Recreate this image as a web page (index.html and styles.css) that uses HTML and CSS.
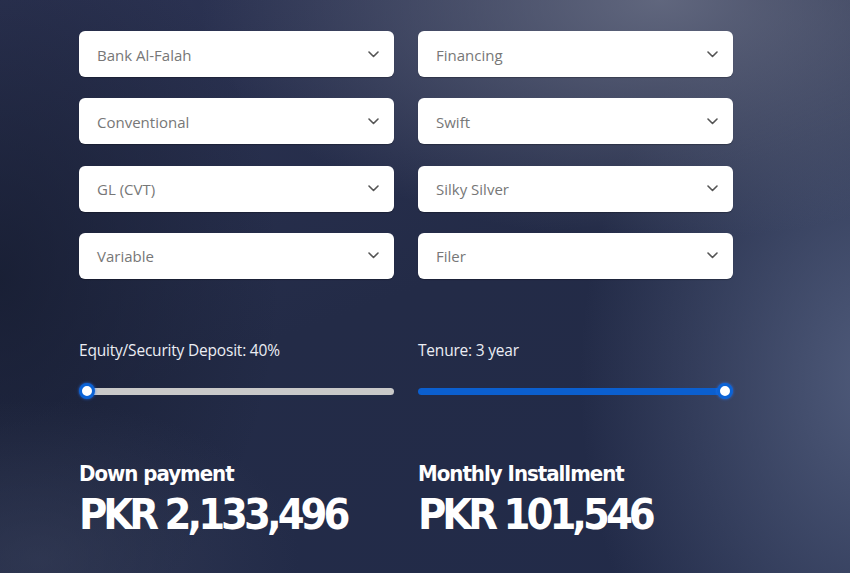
FILE: index.html
```html
<!DOCTYPE html>
<html lang="en">
<head>
<meta charset="utf-8">
<title>Financing Calculator</title>
<link rel="stylesheet" href="styles.css">
</head>
<body>
<main class="calc">
  <section class="selects">
    <div class="select"><span>Bank Al-Falah</span><svg class="chev" width="11" height="7" viewBox="0 0 11 7"><polyline points="1,1 5.5,5.5 10,1"/></svg></div>
    <div class="select"><span>Financing</span><svg class="chev" width="11" height="7" viewBox="0 0 11 7"><polyline points="1,1 5.5,5.5 10,1"/></svg></div>
    <div class="select"><span>Conventional</span><svg class="chev" width="11" height="7" viewBox="0 0 11 7"><polyline points="1,1 5.5,5.5 10,1"/></svg></div>
    <div class="select"><span>Swift</span><svg class="chev" width="11" height="7" viewBox="0 0 11 7"><polyline points="1,1 5.5,5.5 10,1"/></svg></div>
    <div class="select"><span>GL (CVT)</span><svg class="chev" width="11" height="7" viewBox="0 0 11 7"><polyline points="1,1 5.5,5.5 10,1"/></svg></div>
    <div class="select"><span>Silky Silver</span><svg class="chev" width="11" height="7" viewBox="0 0 11 7"><polyline points="1,1 5.5,5.5 10,1"/></svg></div>
    <div class="select"><span>Variable</span><svg class="chev" width="11" height="7" viewBox="0 0 11 7"><polyline points="1,1 5.5,5.5 10,1"/></svg></div>
    <div class="select"><span>Filer</span><svg class="chev" width="11" height="7" viewBox="0 0 11 7"><polyline points="1,1 5.5,5.5 10,1"/></svg></div>
  </section>
  <section class="sliders">
    <div class="slider">
      <div class="slider-label">Equity/Security Deposit: 40%</div>
      <div class="track grey"><span class="thumb thumb-start"></span></div>
    </div>
    <div class="slider">
      <div class="slider-label">Tenure: 3 year</div>
      <div class="track blue"><span class="thumb thumb-end"></span></div>
    </div>
  </section>
  <section class="results">
    <div class="result">
      <div class="result-title">Down payment</div>
      <div class="result-value">PKR 2,133,496</div>
    </div>
    <div class="result">
      <div class="result-title">Monthly Installment</div>
      <div class="result-value">PKR 101,546</div>
    </div>
  </section>
</main>
</body>
</html>
```
FILE: styles.css
```css
html, body {
  margin: 0;
  height: 100%;
}
body {
  width: 850px;
  height: 573px;
  overflow: hidden;
  font-family: "Open Sans", "Noto Sans", sans-serif;
  background-color: #222a45;
  background-image:
    radial-gradient(ellipse 460px 240px at 660px 0px, rgba(106,112,134,0.85), rgba(106,112,134,0) 100%),
    radial-gradient(ellipse 300px 420px at 880px 380px, rgba(84,96,128,0.9), rgba(84,96,128,0) 100%),
    radial-gradient(ellipse 260px 160px at 40px 560px, rgba(56,64,90,0.6), rgba(56,64,90,0) 100%),
    radial-gradient(ellipse 280px 380px at 0px 280px, rgba(22,28,48,0.8), rgba(22,28,48,0) 100%),
    linear-gradient(160deg, #2c3353 0%, #232b47 50%, #222b49 100%);
}
.calc {
  padding: 31px 0 0 79px;
  width: 654px;
}
.selects {
  display: grid;
  grid-template-columns: 315px 315px;
  column-gap: 24px;
  row-gap: 21.3px;
}
.select {
  height: 46px;
  background: #fff;
  border-radius: 6px;
  box-shadow: 0 1px 1px rgba(0,0,0,0.25);
  display: flex;
  align-items: center;
  justify-content: space-between;
  padding: 0 15px 0 18px;
  box-sizing: border-box;
  font-size: 15px;
  color: #777;
}
.select span {
  padding-top: 1px;
}
.chev polyline {
  fill: none;
  stroke: #555;
  stroke-width: 1.6;
  stroke-linecap: round;
  stroke-linejoin: round;
}
.sliders {
  display: grid;
  grid-template-columns: 315px 315px;
  column-gap: 24px;
  margin-top: 60px;
}
.slider-label {
  font-size: 15.5px;
  color: #eceef4;
  line-height: 22px;
  letter-spacing: -0.2px;
}
.track {
  position: relative;
  margin-top: 27px;
  height: 7px;
  border-radius: 4px;
}
.track.grey {
  background: #c9c9c9;
  margin-left: 8px;
}
.track.blue {
  background: #0b5fcf;
  margin-right: 8px;
}
.thumb {
  position: absolute;
  top: 50%;
  width: 10px;
  height: 10px;
  border-radius: 50%;
  background: #fff;
  border: 3px solid #0b63d6;
  box-shadow: 0 0 3px rgba(40,120,255,0.8);
  transform: translate(-50%, -50%);
}
.thumb-start { left: 0; }
.thumb-end { left: 100%; }
.results {
  display: grid;
  grid-template-columns: 315px 315px;
  column-gap: 24px;
  margin-top: 66px;
}
.result {
  font-family: "DejaVu Sans Condensed", "DejaVu Sans", sans-serif;
  font-stretch: condensed;
  font-weight: bold;
  color: #fff;
}
.result-title {
  font-size: 22px;
  letter-spacing: -1px;
  line-height: 26px;
}
.result-value {
  font-size: 43px;
  letter-spacing: -4px;
  line-height: 46px;
  margin-top: 4px;
}
```
